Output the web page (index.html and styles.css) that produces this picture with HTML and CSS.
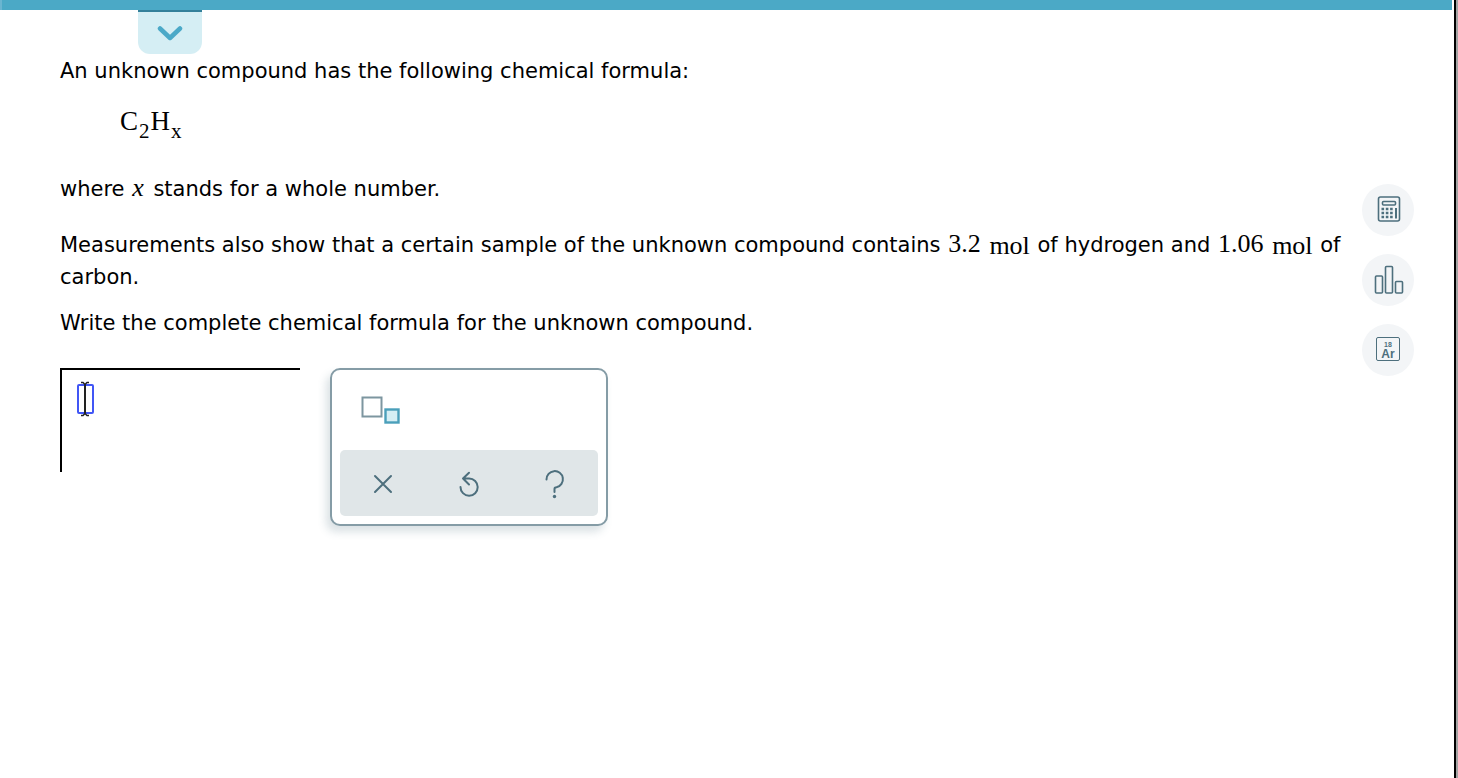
FILE: index.html
```
<!DOCTYPE html>
<html lang="en">

<head>
    <meta charset="UTF-8">
    <title>Chemical Formula</title>
    <link rel="stylesheet" href="styles.css">
</head>
<body>
    <div class="page">
        <header class="topbar"></header>
        <button class="drawer-tab" aria-label="Show menu">
            <svg width="26" height="16" viewBox="0 0 26 16">
                <path d="M3 3.5 L13 13 L23 3.5" fill="none" stroke="#4ba9c8" stroke-width="4.5" stroke-linecap="round" stroke-linejoin="round"/>
            </svg>
        </button>

        <div class="content">
            <main class="question">
                <p>An unknown compound has the following chemical formula:</p>
                <p class="formula">C<sub>2</sub>H<sub>x</sub></p>
                <p>where <i class="math">x</i> stands for a whole number.</p>
                <p>Measurements also show that a certain sample of the unknown compound contains <span class="math">3.2</span> <span class="math unit">mol</span> of hydrogen and <span class="math">1.06</span> <span class="math unit">mol</span> of carbon.</p>
                <p>Write the complete chemical formula for the unknown compound.</p>

                <div class="workspace">
                    <div class="answer">
                        <input class="slot" type="text" aria-label="Chemical formula">
                        <svg class="caret" width="10" height="36" viewBox="0 0 10 36">
                            <path d="M1 1.5 H3 L5 3.5 L7 1.5 H9 M1 34.5 H3 L5 32.5 L7 34.5 H9" fill="none" stroke="#222" stroke-width="1.5"/>
                            <path d="M5 3.5 V32.5" stroke="#222" stroke-width="2"/>
                        </svg>
                    </div>

                    <div class="palette">
                        <button class="subscript" aria-label="Subscript">
                            <svg width="40" height="28" viewBox="0 0 40 28">
                                <rect x="2.5" y="1.5" width="19" height="19" fill="#fff" stroke="#7d96a0" stroke-width="2"/>
                                <rect x="25.5" y="13.5" width="13" height="13" fill="#d5eef4" stroke="#4a9fba" stroke-width="2.4"/>
                            </svg>
                        </button>
                        <div class="actions">
                            <button aria-label="Clear">
                                <svg width="32" height="32" viewBox="0 0 32 32">
                                    <path d="M8 9 L24 25 M24 9 L8 25"/>
                                </svg>
                            </button>
                            <button aria-label="Undo">
                                <svg width="32" height="32" viewBox="0 0 32 32">
                                    <path d="M7.5 20 A8.6 8.6 0 1 0 16 11.5 H10 M16 5.8 L10 11.5 L16 17.5"/>
                                </svg>
                            </button>
                            <button aria-label="Help">
                                <svg width="32" height="32" viewBox="0 0 32 32">
                                    <path d="M7.5 12.5 A8.2 8.2 0 1 1 17.5 20.3 Q15.5 20.5 15.5 22 V25"/>
                                    <circle class="dot" cx="15.5" cy="29.5" r="1.7"/>
                                </svg>
                            </button>
                        </div>
                    </div>
                </div>
            </main>

            <aside class="tools">
                <button aria-label="Calculator">
                    <svg width="32" height="32" viewBox="0 0 32 32">
                        <rect x="6.5" y="3" width="21" height="24" rx="2"/>
                        <rect x="10.5" y="7.5" width="13" height="3.5" rx="1"/>
                        <path d="M9.5 15 H21 M9.5 19 H21 M9.5 23 H21" stroke-width="2.4" stroke-dasharray="2.6 1.7"/>
                        <path d="M24 14 V24.5" stroke-width="2"/>
                    </svg>
                </button>
                <button aria-label="Data">
                    <svg width="32" height="32" viewBox="0 0 32 32">
                        <rect x="3.5" y="12" width="7" height="17" rx="1"/>
                        <rect x="13.5" y="2.5" width="7" height="26.5" rx="1"/>
                        <rect x="23.5" y="17.5" width="7" height="11.5" rx="1"/>
                    </svg>
                </button>
                <button aria-label="Periodic table">
                    <span class="element"><small>18</small>Ar</span>
                </button>
            </aside>
        </div>
    </div>
</body>

</html>
```
FILE: styles.css
```
* {
    box-sizing: border-box;
}

body {
    margin: 0;
    background: #a3a3a3;
    color: #000;
    font-family: Verdana, "DejaVu Sans", sans-serif;
    font-size: 21px;
    line-height: 32px;
}

button {
    border: none;
    padding: 0;
    background: none;
    cursor: pointer;
}

svg {
    display: block;
}

.page {
    min-height: 100vh;
    margin-right: 2px;
    padding-right: 2px;
    border-right: 2px solid #000;
    background: #fff;
}

.topbar {
    height: 10px;
    background: #4ba9c6;
    border-left: 2px solid #6bb5d0;
}

.drawer-tab {
    display: flex;
    justify-content: center;
    align-items: center;
    width: 64px;
    height: 44px;
    margin-left: 138px;
    border-top: 2px solid #34809a;
    border-radius: 0 0 12px 12px;
    background: #d5eef4;
}

.content {
    display: flex;
    gap: 12px;
    padding: 1px 38px 0 60px;
}

.question {
    flex: 1;
}

.question p {
    margin: 0 0 24px;
}

.question p:first-child {
    margin-bottom: 18px;
}

.question p:nth-of-type(4) {
    margin-bottom: 14px;
}

.question .formula {
    margin: 0 0 36px 60px;
    font-family: "Times New Roman", "Liberation Serif", serif;
    font-size: 27px;
}

.formula sub {
    margin: 0 1px;
    font-size: 21px;
    line-height: 0;
    vertical-align: -8px;
}

.math {
    margin: 0 1px;
    font-family: "Times New Roman", "Liberation Serif", serif;
    font-size: 26px;
    line-height: 0;
}

i.math {
    margin-right: 3px;
}

.unit {
    vertical-align: -2px;
}

.workspace {
    display: flex;
    align-items: flex-start;
    gap: 30px;
    margin-top: 29px;
}

.answer {
    position: relative;
    width: 240px;
    height: 104px;
    padding: 14px 15px;
    border-top: 2px solid #000;
    border-left: 2px solid #000;
}

.slot {
    display: block;
    width: 17px;
    height: 30px;
    padding: 0;
    border: 2px solid #4156f5;
    border-radius: 2px;
    background: #fff;
    outline: none;
}

.caret {
    position: absolute;
    top: 11px;
    left: 18px;
}

.palette {
    width: 278px;
    padding: 8px;
    border: 2px solid #859ca6;
    border-radius: 10px;
    background: #fff;
    box-shadow: -4px 6px 8px rgba(77, 111, 125, 0.2);
}

.subscript {
    display: block;
    margin: 18px 0 26px 20px;
}

.actions {
    display: flex;
    height: 66px;
    border-radius: 5px;
    background: #e0e6e8;
}

.actions button {
    display: flex;
    flex: 1;
    justify-content: center;
    align-items: center;
}

.actions svg,
.tools svg {
    fill: none;
    stroke: #4d6f7d;
    stroke-width: 2;
    stroke-linecap: round;
    stroke-linejoin: round;
}

.actions .dot {
    fill: #4d6f7d;
    stroke: none;
}

.tools {
    display: flex;
    flex-direction: column;
    gap: 18px;
    margin-top: 129px;
}

.tools button {
    display: flex;
    justify-content: center;
    align-items: center;
    width: 52px;
    height: 52px;
    border-radius: 50%;
    background: #f3f5f7;
}

.tools svg {
    stroke-width: 1.6;
    stroke-linecap: butt;
}

.element {
    display: flex;
    flex-direction: column;
    align-items: center;
    width: 24px;
    height: 24px;
    margin-bottom: 2px;
    padding-top: 3px;
    border: 1px solid #4d6f7d;
    border-radius: 2px;
    color: #4d6f7d;
    font: bold 12px/12px Arial, "Liberation Sans", sans-serif;
}

.element small {
    font-size: 7px;
    line-height: 7px;
}
```
